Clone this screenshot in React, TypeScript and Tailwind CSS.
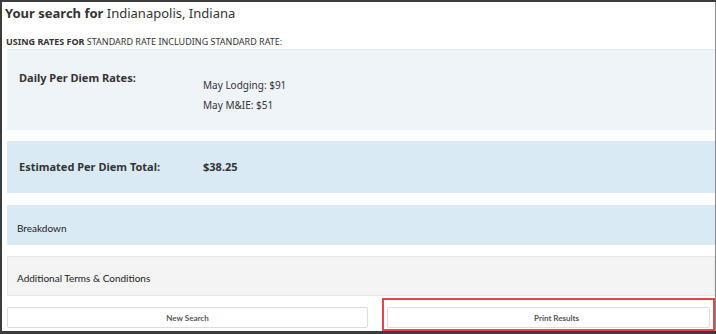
import React from "react";

export default function App() {
  return (
    <div className="w-[716px] h-[334px] bg-[#3c3c3c] flex" style={{ fontFamily: '"Open Sans", sans-serif' }}>
      <div className="flex-1 flex mt-[2px] ml-[2px] mb-[3px]">
        <div className="flex-1 bg-white flex flex-col text-[#333]">
          <div className="pl-[3px] pt-[1px] h-[24px] text-[13px] leading-[20px]" style={{ fontFamily: '"Noto Sans", sans-serif' }}>
            <span className="font-bold">Your search for</span> Indianapolis, Indiana
          </div>
          <div className="pl-[4px] mt-[9px] h-[14px] text-[9px] leading-[14px]" style={{ fontFamily: '"Noto Sans", sans-serif' }}>
            <span className="font-bold">USING RATES FOR</span> STANDARD RATE INCLUDING STANDARD RATE:
          </div>
          <div className="ml-[5px] mr-0 h-[81px] bg-[#eff4f9] border-t border-[#e2ebf2] flex" style={{ fontFamily: '"Noto Sans", sans-serif' }}>
            <div className="w-[196px] pl-[12px] pt-[20px] text-[11px] font-bold">Daily Per Diem Rates:</div>
            <div className="pt-[25px] text-[10px] leading-[20px]">
              <div>May Lodging: $91</div>
              <div>May M&amp;IE: $51</div>
            </div>
          </div>
          <div className="ml-[5px] mt-[11px] h-[52px] bg-[#d9eaf5] flex items-center" style={{ fontFamily: '"Noto Sans", sans-serif' }}>
            <div className="w-[196px] pl-[12px] text-[11px] font-bold">Estimated Per Diem Total:</div>
            <div className="text-[11px] font-bold">$38.25</div>
          </div>
          <div className="ml-[5px] mt-[12px] h-[40px] bg-[#d9eaf5] flex items-center pl-[10px] pt-[6px] text-[10px] text-[#222]" style={{ fontFamily: 'Lato, sans-serif' }}>
            Breakdown
          </div>
          <div className="ml-[5px] mt-[11px] h-[40px] bg-[#f4f4f4] border border-[#e8e8e8] flex items-center pl-[9px] pt-[4px] text-[10px] text-[#222]" style={{ fontFamily: 'Lato, sans-serif' }}>
            Additional Terms &amp; Conditions
          </div>
          <div className="flex ml-[5px] mt-[2px] h-[33px]" style={{ fontFamily: 'Lato, sans-serif' }}>
            <div className="w-[361px] pt-[9px]">
              <div className="h-[21px] border border-[#dcdcdc] rounded-[2px] flex items-center justify-center text-[8px] font-bold text-[#555]">
                New Search
              </div>
            </div>
            <div className="ml-[14px] w-[333px] border-2 border-[#e0474c] pt-[7px] pl-[3px] pr-[3px]">
              <div className="h-[21px] border border-[#dcdcdc] rounded-[2px] flex items-center justify-center pl-[16px] text-[8px] font-bold text-[#555]">
                Print Results
              </div>
            </div>
          </div>
        </div>
        <div className="w-[3px] bg-[#8c8c8c]" />
      </div>
    </div>
  );
}
